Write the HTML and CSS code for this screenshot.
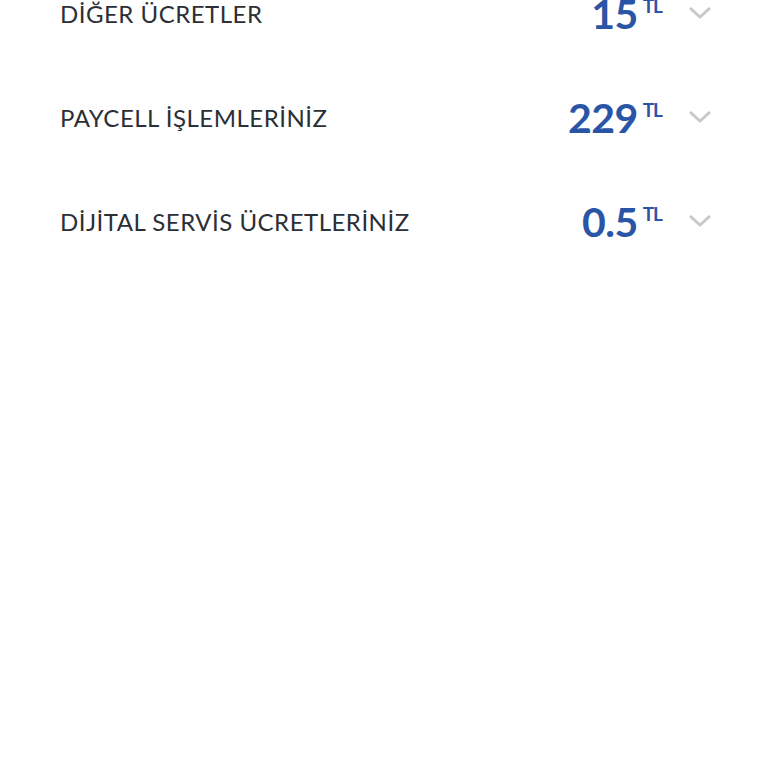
FILE: index.html
```html
<!doctype html>
<html lang="tr">

<head>
    <meta charset="utf-8">
    <meta name="viewport" content="width=device-width, initial-scale=1">
    <title>Faturam</title>
    <link rel="stylesheet" href="styles.css">
</head>

<body>
    <ul class="fees">
        <li class="fee">
            <span class="fee-name">DİĞER ÜCRETLER</span>
            <span class="fee-amount">15<sup>TL</sup></span>
            <svg class="chevron" width="24" height="14" viewBox="0 0 24 14"><path d="M2 2 L12 11 L22 2" /></svg>
        </li>
        <li class="fee">
            <span class="fee-name">PAYCELL İŞLEMLERİNİZ</span>
            <span class="fee-amount">229<sup>TL</sup></span>
            <svg class="chevron" width="24" height="14" viewBox="0 0 24 14"><path d="M2 2 L12 11 L22 2" /></svg>
        </li>
        <li class="fee">
            <span class="fee-name">DİJİTAL SERVİS ÜCRETLERİNİZ</span>
            <span class="fee-amount">0.5<sup>TL</sup></span>
            <svg class="chevron" width="24" height="14" viewBox="0 0 24 14"><path d="M2 2 L12 11 L22 2" /></svg>
        </li>
    </ul>
</body>

</html>
```

FILE: styles.css
```css
body {
    margin: 0;
    background-color: #ffffff;
    font-family: Lato, "Noto Sans", sans-serif;
    overflow: hidden;
}

.fees {
    list-style: none;
    margin: -39px 0 0 0;
    padding: 0 56px 0 60px;
}

.fee {
    display: flex;
    align-items: center;
    height: 104px;
}

.fee-name {
    flex: 1;
    color: #2b2f36;
    font-size: 24px;
    letter-spacing: 0.5px;
}

.fee-amount {
    display: flex;
    align-items: flex-start;
    color: #2a55a6;
    font-size: 41px;
    font-weight: bold;
    line-height: 1;
    letter-spacing: -0.5px;
}

.fee-amount sup {
    font-size: 19px;
    line-height: 1;
    letter-spacing: -1px;
    margin-left: 5px;
    margin-top: 3px;
}

.chevron {
    margin-left: 26px;
    fill: none;
    stroke: #c9c9c9;
    stroke-width: 3;
}
```
